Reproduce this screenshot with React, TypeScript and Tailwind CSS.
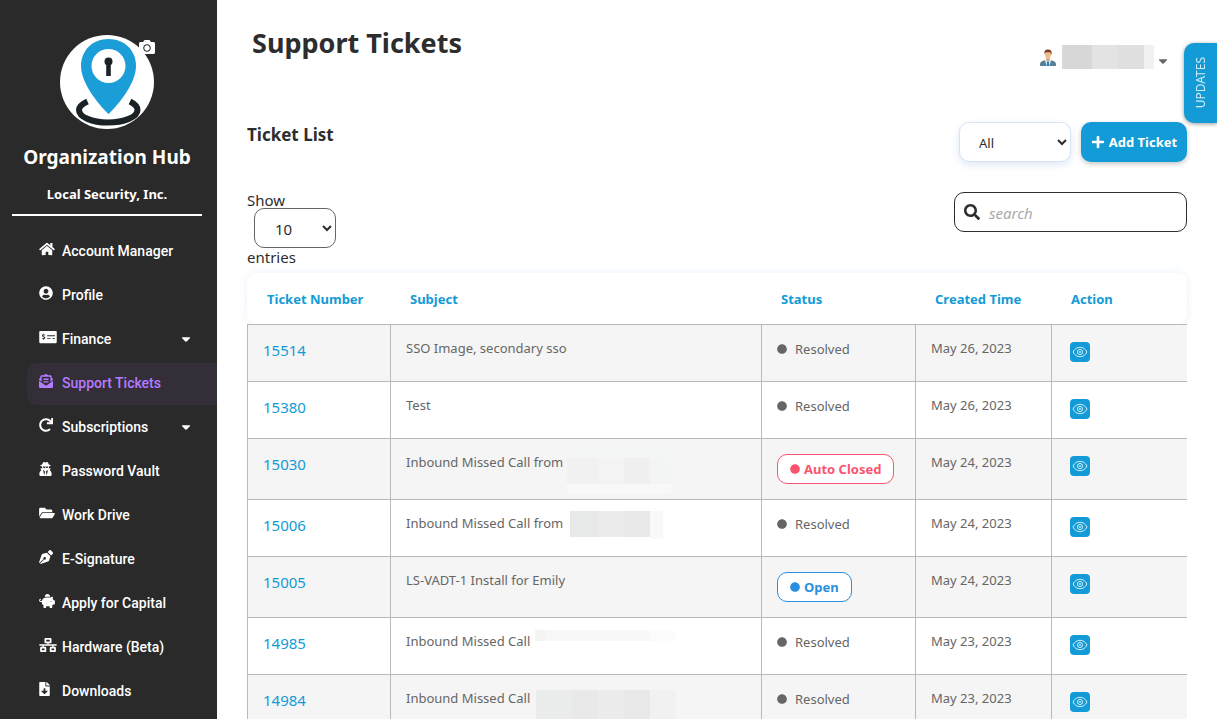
import type { ReactNode } from 'react'
import type { IconType } from 'react-icons'
import {
  FaCamera,
  FaCaretDown,
  FaCircle,
  FaEnvelopeOpenText,
  FaFileDownload,
  FaFolderOpen,
  FaHome,
  FaMoneyCheckAlt,
  FaNetworkWired,
  FaPenNib,
  FaPiggyBank,
  FaPlus,
  FaRedo,
  FaSearch,
  FaUserCircle,
  FaUserSecret,
} from 'react-icons/fa'

interface NavItem {
  label: string
  icon: IconType
  iconWidth: string
  active?: boolean
  expandable?: boolean
}

const navItems: NavItem[] = [
  { label: 'Account Manager', icon: FaHome, iconWidth: 'w-4' },
  { label: 'Profile', icon: FaUserCircle, iconWidth: 'w-[14px]' },
  { label: 'Finance', icon: FaMoneyCheckAlt, iconWidth: 'w-[18px]', expandable: true },
  { label: 'Support Tickets', icon: FaEnvelopeOpenText, iconWidth: 'w-[14px]', active: true },
  { label: 'Subscriptions', icon: FaRedo, iconWidth: 'w-[14px]', expandable: true },
  { label: 'Password Vault', icon: FaUserSecret, iconWidth: 'w-[13px]' },
  { label: 'Work Drive', icon: FaFolderOpen, iconWidth: 'w-4' },
  { label: 'E-Signature', icon: FaPenNib, iconWidth: 'w-[14px]' },
  { label: 'Apply for Capital', icon: FaPiggyBank, iconWidth: 'w-4' },
  { label: 'Hardware (Beta)', icon: FaNetworkWired, iconWidth: 'w-[18px]' },
  { label: 'Downloads', icon: FaFileDownload, iconWidth: 'w-[11px]' },
]

type Status = 'Resolved' | 'Auto Closed' | 'Open'

interface Ticket {
  number: string
  subject: string
  status: Status
  created: string
  mask?: ReactNode
}

const tickets: Ticket[] = [
  { number: '15514', subject: 'SSO Image, secondary sso', status: 'Resolved', created: 'May 26, 2023' },
  { number: '15380', subject: 'Test', status: 'Resolved', created: 'May 26, 2023' },
  {
    number: '15030',
    subject: 'Inbound Missed Call from',
    status: 'Auto Closed',
    created: 'May 24, 2023',
    mask: (
      <span className="absolute -top-[5px] left-[161px] flex w-[104px] flex-col">
        <span className="ml-1 h-[10px] bg-[#f4f5f5]" />
        <span className="flex h-[26px]">
          <span className="w-[31px] bg-[#f1f1f1]" />
          <span className="w-[26px] bg-[#f3f3f3]" />
          <span className="w-[26px] bg-[#f0f0f0]" />
          <span className="w-[21px] bg-[#f3f4f4]" />
        </span>
        <span className="h-[10px] bg-[#f8f8f8]" />
      </span>
    ),
  },
  {
    number: '15006',
    subject: 'Inbound Missed Call from',
    status: 'Resolved',
    created: 'May 24, 2023',
    mask: (
      <span className="absolute -top-[3px] left-[164px] flex">
        <span className="h-[26px] w-[28px] bg-[#e7e9e8]" />
        <span className="h-[26px] w-[26px] bg-[#ececec]" />
        <span className="h-[26px] w-[26px] bg-[#e8e8e8]" />
        <span className="h-[28px] w-[13px] bg-[#f9f9f9]" />
      </span>
    ),
  },
  { number: '15005', subject: 'LS-VADT-1 Install for Emily', status: 'Open', created: 'May 24, 2023' },
  {
    number: '14985',
    subject: 'Inbound Missed Call',
    status: 'Resolved',
    created: 'May 23, 2023',
    mask: (
      <span className="absolute -top-[2px] left-[129px] flex h-[11px]">
        <span className="w-[11px] bg-[#f4f4f3]" />
        <span className="w-[104px] bg-[#f8f8f8]" />
        <span className="w-[26px] bg-[#fcfcfc]" />
      </span>
    ),
  },
  {
    number: '14984',
    subject: 'Inbound Missed Call',
    status: 'Resolved',
    created: 'May 23, 2023',
    mask: (
      <span className="absolute top-[1px] left-[130px] flex h-[32px]">
        <span className="w-[36px] bg-[#ebecec]" />
        <span className="w-[26px] bg-[#e9e9e9]" />
        <span className="w-[26px] bg-[#ececec]" />
        <span className="w-[26px] bg-[#e8e8e8]" />
        <span className="w-[26px] bg-[#f1f1f1]" />
      </span>
    ),
  },
]

const columns = [
  { label: 'Ticket Number', className: 'w-[143px] rounded-l-[10px]' },
  { label: 'Subject', className: '' },
  { label: 'Status', className: 'w-[154px]' },
  { label: 'Created Time', className: 'w-[136px]' },
  { label: 'Action', className: 'w-[136px] rounded-r-[10px]' },
]

const PinLogo = () => (
  <svg viewBox="0 0 94 94" className="size-[94px]" aria-hidden="true">
    <circle cx="47" cy="47" r="47" fill="#fff" />
    <path
      d="M27.5 66.5 C22 69 19 72 19 75 C19 82 32 87.5 48 87.5 C64 87.5 77.500 82 77.500 75 C77.500 72 75 69 70 66.500"
      fill="none"
      stroke="#1b2226"
      strokeWidth="6"
    />
    <path
      d="M48.500 79 C42 73 21 50 21 31 C21 15 33 4 48.500 4 C64 4 76 15 76 31 C76 50 55 73 48.500 79Z"
      fill="#1b9dd8"
    />
    <circle cx="48.500" cy="31" r="17" fill="#fff" />
    <circle cx="48.500" cy="26.500" r="4" fill="#1b2226" />
    <path d="M46.200 27h4.600v14h-4.600z" fill="#1b2226" />
  </svg>
)

const PersonIcon = () => (
  <svg viewBox="0 0 16 17" className="h-[17px] w-4" aria-hidden="true">
    <path d="M0 17v-2c0-2 2.500-3.200 5-3.700h6c2.500.5 5 1.700 5 3.700v2z" fill="#5d7f92" />
    <path d="M5 11l3-1 3 1-1.500 6h-3z" fill="#e8f1f6" />
    <path d="M7.200 12.200h1.600l.7 4.800h-3z" fill="#1e88d8" />
    <path d="M6.300 8h3.400v3.200L8 12.600l-1.700-1.400z" fill="#e0a672" />
    <path d="M4.800 4.500c0-2 1.300-3 3.200-3s3.200 1 3.200 3c0 3-1.500 5.300-3.200 5.300S4.800 7.500 4.800 4.500z" fill="#e9bd8c" />
    <path d="M4.300 5.500C3.900 2.300 5.300.5 7.500.5c3 0 4.600 1 4.100 5l-.7-.2-.5-2.100H6.200l-1.300.5z" fill="#7a3f22" />
  </svg>
)

const EyeIcon = () => (
  <svg viewBox="0 0 16 16" className="size-4" fill="none" stroke="#fff" strokeWidth="0.8" aria-hidden="true">
    <path d="M1 8c1.500-3 4-4.700 7-4.700S13.500 5 15 8c-1.500 3-4 4.700-7 4.700S2.500 11 1 8z" />
    <circle cx="8" cy="8" r="2.600" />
    <circle cx="8" cy="8" r="0.600" />
  </svg>
)

const StatusBadge = ({ status }: { status: Status }) => {
  if (status === 'Resolved') {
    return (
      <span className="flex h-[18px] items-center gap-2 text-[#666]">
        <FaCircle className="size-[10px]" />
        {status}
      </span>
    )
  }

  return (
    <span
      className={
        status === 'Open'
          ? 'inline-flex h-[30px] items-center gap-1 rounded-[10px] border border-[#2a8fe0] bg-white px-3 font-bold text-[#2a8fe0]'
          : 'inline-flex h-[30px] items-center gap-1 rounded-[10px] border border-[#fb5470] bg-white px-3 font-bold text-[#fb5470]'
      }
    >
      <FaCircle className="size-[10px]" />
      {status}
    </span>
  )
}

const Sidebar = () => (
  <aside className="w-[217px] shrink-0 bg-[#2a2a2a] text-white">
    <div className="mx-3 mr-[15px] flex flex-col items-center border-b-2 border-white pt-[35px] pb-[10px]">
      <div className="relative">
        <PinLogo />
        <button type="button" aria-label="Change logo" className="absolute top-1 -right-px">
          <FaCamera className="size-4" />
        </button>
      </div>
      <h2 className="mt-[14px] text-[19px] leading-7 font-bold">Organization Hub</h2>
      <p className="mt-[13px] text-[13px] leading-5 font-bold">Local Security, Inc.</p>
    </div>

    <nav className="mt-[15px] flex flex-col gap-[2px] pl-[27px] font-[Roboto,sans-serif] text-sm font-medium">
      {navItems.map(({ label, icon: Icon, iconWidth, active, expandable }) => (
        <a
          key={label}
          href="#"
          className={
            active
              ? 'flex h-[42px] items-center rounded-l-[10px] bg-[#332e38] pr-6 pb-[2px] pl-3 text-[#b57bff]'
              : 'flex h-[42px] items-center pr-6 pb-[2px] pl-3'
          }
        >
          <span className="flex w-[23px] pb-1">
            <Icon className={`h-[14px] ${iconWidth}`} />
          </span>
          {label}
          {expandable && <FaCaretDown className="ml-auto size-[14px]" />}
        </a>
      ))}
    </nav>
  </aside>
)

const TicketTable = () => (
  <table className="w-full table-fixed border-separate border-spacing-0 text-[13px] text-[#666]">
    <thead>
      <tr className="rounded-[10px] shadow-[0_0_10px_#e8effa]">
        {columns.map((col) => (
          <th
            key={col.label}
            className={`${col.className} h-[51px] bg-white px-5 pt-[2px] text-left font-bold text-[#129bd6]`}
          >
            {col.label}
          </th>
        ))}
      </tr>
    </thead>
    <tbody className="align-top">
      {tickets.map((ticket) => (
        <tr key={ticket.number} className="h-[57px] odd:bg-[#f5f5f5]">
          <td className="border-t border-l border-[#b9b9b9] px-[15px] pt-[14px] text-[15px] leading-[22px]">
            <a href="#" className="text-[#129bd6]">
              {ticket.number}
            </a>
          </td>
          <td className="border-t border-l border-[#b9b9b9] px-[15px] pt-[14px] leading-[18px]">
            <div className="relative">
              {ticket.subject}
              {ticket.mask}
            </div>
          </td>
          <td className="border-t border-l border-[#b9b9b9] px-[15px] pt-[15px] pb-[15px] leading-[18px]">
            <StatusBadge status={ticket.status} />
          </td>
          <td className="border-t border-l border-[#b9b9b9] px-[15px] pt-[14px] leading-[18px]">{ticket.created}</td>
          <td className="border-t border-l border-[#b9b9b9] px-[18px] pt-[17px]">
            <button
              type="button"
              aria-label={`View ticket ${ticket.number}`}
              className="flex size-5 items-center justify-center rounded bg-[#129bd6]"
            >
              <EyeIcon />
            </button>
          </td>
        </tr>
      ))}
    </tbody>
  </table>
)

export default function App() {
  return (
    <div className="flex h-screen overflow-hidden bg-white font-['Noto_Sans',sans-serif] text-[#2d2d2d]">
      <Sidebar />

      <main className="min-w-0 flex-1 px-[30px]">
        <header className="flex h-[122px] items-start justify-between">
          <h1 className="mt-6 ml-[5px] text-[27px] leading-[38px] font-bold">Support Tickets</h1>
          <button type="button" aria-label="Account menu" className="mt-[45px] mr-[17px] flex h-6 items-center">
            <PersonIcon />
            <span className="ml-[6px] flex h-6">
              <span className="w-1 bg-[#d9d8d5]" />
              <span className="w-[26px] bg-[#d7d7d7]" />
              <span className="w-[26px] bg-[#e3e3e3]" />
              <span className="w-[26px] bg-[#dfdfdf]" />
              <span className="w-[10px] bg-[#f1f1ef]" />
            </span>
            <FaCaretDown className="mt-2 ml-[2px] size-[14px] text-[#666]" />
          </button>
        </header>

        <section className="flex h-[70px] items-start justify-between">
          <h2 className="text-[17px] leading-[26px] font-bold">Ticket List</h2>
          <div className="flex gap-[10px]">
            <select
              aria-label="Filter by status"
              className="h-10 w-28 rounded-[10px] border border-[#d6e4f5] bg-white pt-[2px] pl-[15px] text-[13px] shadow-[0_3px_8px_#dfe9f6]"
            >
              <option>All</option>
            </select>
            <button
              type="button"
              className="flex h-10 w-[106px] items-center justify-center gap-1 rounded-[10px] bg-[#129bd6] text-[13px] font-bold text-white shadow-[0_2px_5px_#c4c4c4]"
            >
              <FaPlus className="size-[14px]" />
              <span className="pt-[2px]">Add Ticket</span>
            </button>
          </div>
        </section>

        <section className="flex items-start justify-between pb-[7px]">
          <label className="flex flex-col text-[15px] leading-4">
            Show
            <select className="ml-[7px] h-10 w-[82px] rounded-[10px] border border-[#666] bg-white pt-[2px] pl-4 text-[15px]">
              <option>10</option>
            </select>
            <span className="leading-[18px]">entries</span>
          </label>
          <label className="flex h-10 w-[233px] items-center gap-[9px] rounded-[10px] border border-[#2d2d2d] px-[9px]">
            <FaSearch className="size-4 shrink-0" />
            <input
              type="search"
              aria-label="Search tickets"
              placeholder="search"
              className="w-full min-w-0 pt-[2px] text-[15px] outline-none placeholder:text-[#aaa] placeholder:italic"
            />
          </label>
        </section>

        <TicketTable />
      </main>

      <button
        type="button"
        className="fixed top-[43px] right-0 flex h-20 w-[33px] items-center justify-center rounded-l-[10px] bg-[#129bd6] text-xs text-white/80 shadow-[0_1px_4px_#999]"
      >
        <span className="rotate-180 [writing-mode:vertical-rl]">UPDATES</span>
      </button>
    </div>
  )
}
